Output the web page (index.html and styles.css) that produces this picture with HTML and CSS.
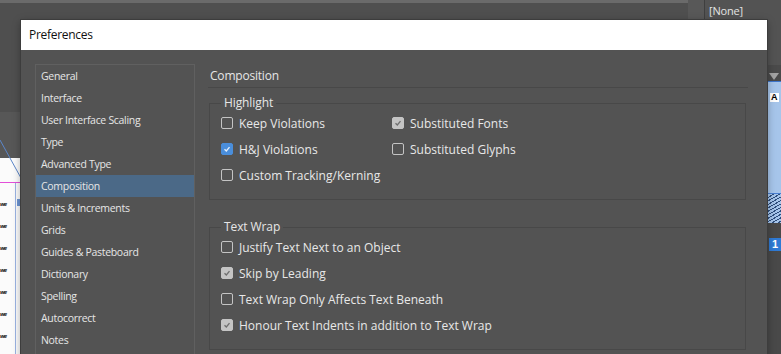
FILE: index.html
```html
<!DOCTYPE html>
<html lang="en">

<head>
    <meta charset="UTF-8">
    <meta name="viewport" content="width=device-width, initial-scale=1.0">
    <title>Preferences</title>
    <link rel="stylesheet" href="styles.css">
</head>

<body>

    <!-- application behind the dialog -->
    <div id="app">
        <div class="workspace">
            <div class="ws-bar"></div>
            <div class="ws-tools"></div>
            <div class="pasteboard"></div>
            <div class="page">
                <div class="page-inner">
                    <div class="col-text">
                        <span>we</span><span>we</span><span>we</span><span>we</span>
                        <span>we</span><span>we</span><span>we</span>
                    </div>
                    <div class="col-frame"><span class="frame-port"></span></div>
                </div>
            </div>
            <svg class="thread" width="21" height="60" viewBox="0 0 21 60">
                <line x1="0" y1="0" x2="21" y2="38" stroke="#5b86c9" stroke-width="1"/>
            </svg>
        </div>
        <div class="ws-gutter"></div>
        <div class="side-panel">
            <div class="none-label">[None]</div>
            <div class="pages-head"><span class="tri"></span></div>
            <div class="thumb">
                <div class="thumb-top"><span class="master">A</span></div>
                <div class="thumb-hatch"></div>
            </div>
            <div class="page-num"><span>1</span></div>
        </div>
    </div>

    <div id="dialog">
        <div class="title-bar">Preferences</div>
        <div class="dialog-body">
            <ul class="nav">
                <li>General</li>
                <li>Interface</li>
                <li>User Interface Scaling</li>
                <li>Type</li>
                <li>Advanced Type</li>
                <li class="active">Composition</li>
                <li>Units &amp; Increments</li>
                <li>Grids</li>
                <li>Guides &amp; Pasteboard</li>
                <li>Dictionary</li>
                <li>Spelling</li>
                <li>Autocorrect</li>
                <li>Notes</li>
            </ul>

            <div class="panel">
                <div class="panel-title">Composition</div>

                <fieldset class="group">
                    <legend>Highlight</legend>
                    <div class="checks two-col">
                        <div class="check"><span class="box"></span>Keep Violations</div>
                        <div class="check"><span class="box on grey"><svg viewBox="0 0 12 12"><path d="M3 6.2 L5.2 8.4 L9 3.8"/></svg></span>Substituted Fonts</div>
                        <div class="check"><span class="box on blue"><svg viewBox="0 0 12 12"><path d="M3 6.2 L5.2 8.4 L9 3.8"/></svg></span>H&amp;J Violations</div>
                        <div class="check"><span class="box"></span>Substituted Glyphs</div>
                        <div class="check"><span class="box"></span>Custom Tracking/Kerning</div>
                    </div>
                </fieldset>

                <fieldset class="group wrap-group">
                    <legend>Text Wrap</legend>
                    <div class="checks">
                        <div class="check"><span class="box"></span>Justify Text Next to an Object</div>
                        <div class="check"><span class="box on grey"><svg viewBox="0 0 12 12"><path d="M3 6.2 L5.2 8.4 L9 3.8"/></svg></span>Skip by Leading</div>
                        <div class="check"><span class="box"></span>Text Wrap Only Affects Text Beneath</div>
                        <div class="check"><span class="box on grey"><svg viewBox="0 0 12 12"><path d="M3 6.2 L5.2 8.4 L9 3.8"/></svg></span>Honour Text Indents in addition to Text Wrap</div>
                    </div>
                </fieldset>
            </div>
        </div>
    </div>

</body>

</html>
```

FILE: styles.css
```css
body {
    margin: 0;
    background-color: #535353;
    font-family: "Open Sans", "Noto Sans", Arial, sans-serif;
    overflow: hidden;
}

/* ---------- app behind ---------- */

#app {
    display: flex;
    width: 781px;
    height: 354px;
}

.workspace {
    position: relative;
    width: 691px;
    display: flex;
    flex-direction: column;
}

.ws-bar {
    height: 3px;
    background-color: #6a6a6a;
}

.ws-tools {
    height: 110px;
    background-color: #4f4f4f;
}

.pasteboard {
    height: 47px;
    background-color: #575757;
}

.page {
    flex: 1;
    background-color: #fbfbfb;
    padding-top: 24px;
}

.page-inner {
    display: flex;
    height: 100%;
    border-top: 1px solid #e34fd8;
}

.col-text {
    width: 15px;
    display: flex;
    flex-direction: column;
    padding-top: 17px;
}

.col-text span {
    height: 22px;
    font-size: 6px;
    font-weight: bold;
    font-style: italic;
    letter-spacing: -1px;
    color: #222;
}

.col-frame {
    flex: 1;
    border-left: 1px solid #9ab3e3;
    padding-top: 16px;
}

.frame-port {
    display: block;
    width: 5px;
    height: 7px;
    margin-left: 1px;
    background-color: #6d95d3;
}

.thread {
    position: absolute;
    left: 0;
    top: 140px;
}

.ws-gutter {
    width: 16px;
    background-color: #585858;
    border-right: 1px solid #3f3f3f;
}

.side-panel {
    flex: 1;
    display: flex;
    flex-direction: column;
    background-color: #535353;
}

.none-label {
    height: 62px;
    padding: 3px 0 0 4px;
    font-size: 11px;
    color: #e4e4e4;
    letter-spacing: -0.2px;
}

.pages-head {
    height: 16px;
    padding: 8px 0 0 64px;
    box-sizing: border-box;
    background-color: #4a4a4a;
}

.tri {
    display: block;
    width: 0;
    height: 0;
    border-left: 5px solid transparent;
    border-right: 5px solid transparent;
    border-top: 7px solid #a3a3a3;
}

.thumb {
    margin-left: 40px;
    height: 141px;
    background-color: #a6c5ea;
    border-top: 1px solid #3e76cc;
    display: flex;
    flex-direction: column;
}

.thumb-top {
    flex: 1;
    padding: 1px 0 0 25px;
}

.master {
    display: inline-block;
    background-color: #fff;
    color: #000;
    font-family: Arial, sans-serif;
    font-size: 9px;
    font-weight: bold;
    line-height: 9px;
    padding: 0 1px;
}

.thumb-hatch {
    height: 29px;
    border-top: 1px solid #4a7fd0;
    background: repeating-linear-gradient(150deg, #a6c5ea 0 2px, #2f4e7c 2px 3px);
}

.page-num {
    flex: 1;
    background-color: #494949;
    padding: 8px 0 0 64px;
}

.page-num span {
    display: inline-block;
    width: 12px;
    height: 13px;
    background-color: #2f7ad4;
    color: #fff;
    font-family: Arial, sans-serif;
    font-size: 11px;
    font-weight: bold;
    line-height: 13px;
    text-align: center;
}

/* ---------- dialog ---------- */

#dialog {
    position: absolute;
    left: 21px;
    top: 20px;
    width: 746px;
    height: 350px;
    background-color: #535353;
    box-shadow: 0 0 0 1px #3d3d3d, 0 2px 8px rgba(0, 0, 0, 0.35);
}

.title-bar {
    height: 30px;
    line-height: 29px;
    padding-left: 8px;
    background-color: #fff;
    color: #111;
    font-size: 12px;
    letter-spacing: -0.3px;
}

.dialog-body {
    display: flex;
    gap: 13px;
    padding: 14px 0 0 14px;
    color: #e6e6e6;
}

.nav {
    list-style: none;
    margin: 0;
    padding: 0;
    width: 158px;
    height: 300px;
    border: 1px solid #606060;
    font-size: 10.5px;
    letter-spacing: -0.3px;
}

.nav li {
    height: 22px;
    line-height: 23px;
    padding-left: 5px;
}

.nav li.active {
    background-color: #4b6987;
}

.panel {
    width: 540px;
}

.panel-title {
    margin-top: 1px;
    height: 22px;
    line-height: 22px;
    padding-left: 2px;
    border-bottom: 1px solid #484848;
    font-size: 12px;
    letter-spacing: -0.2px;
}

.group {
    margin: 8px 2px 0 1px;
    padding: 0 0 11px 11px;
    border: 1px solid #484848;
}

.group legend {
    padding: 0 3px;
    line-height: 14px;
    font-size: 12px;
    letter-spacing: -0.1px;
}

.wrap-group {
    margin-top: 20px;
}

.checks {
    display: grid;
    grid-auto-rows: 26px;
}

.checks.two-col {
    grid-template-columns: 171px auto;
}

.check {
    display: flex;
    align-items: center;
    font-size: 12px;
    color: #e8e8e8;
}

.box {
    width: 12px;
    height: 12px;
    box-sizing: border-box;
    margin-right: 6px;
    border: 1px solid #c4c4c4;
    border-radius: 2px;
    display: flex;
}

.box svg {
    width: 10px;
    height: 10px;
    fill: none;
    stroke-width: 1.6;
}

.box.grey {
    background-color: #c4c4c4;
}

.box.grey svg {
    stroke: #6f6f6f;
}

.box.blue {
    background-color: #4a8edb;
    border-color: #4a8edb;
}

.box.blue svg {
    stroke: #e3eefb;
}
```
